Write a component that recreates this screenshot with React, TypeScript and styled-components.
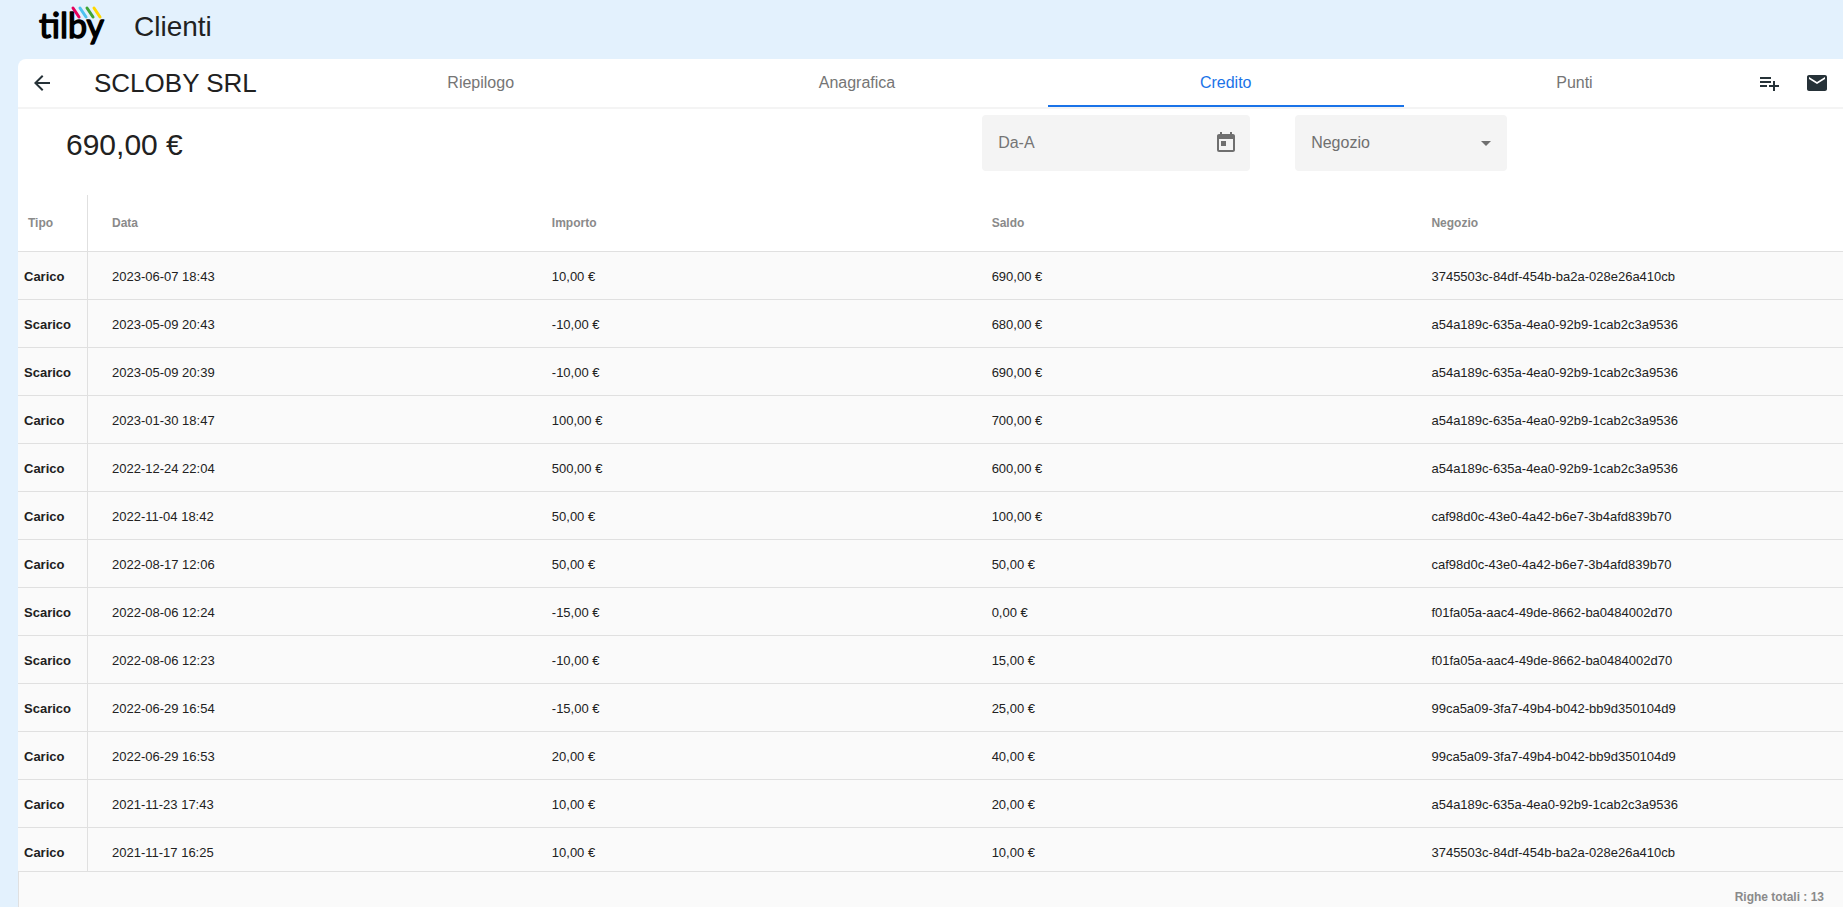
import React from "react";
import styled, { createGlobalStyle } from "styled-components";
import {
  MdArrowBack,
  MdArrowDropDown,
  MdMail,
  MdPlaylistAdd,
  MdToday,
} from "react-icons/md";

const GlobalStyle = createGlobalStyle`
  *, *::before, *::after { box-sizing: border-box; }
  body {
    margin: 0;
    background: #e3f1fd;
    color: #212121;
    font-family: "Liberation Sans", Arial, sans-serif;
  }
  button, input, select { font: inherit; color: inherit; }
`;

const Page = styled.div`
  display: flex;
  flex-direction: column;
  height: 100vh;
  overflow: hidden;
`;

const TopBar = styled.header`
  display: flex;
  flex: none;
  align-items: center;
  gap: 28px;
  height: 59px;
  padding: 0 36px 5px;
`;

const Logo = styled.svg`
  display: block;
  width: 70px;
  height: 50px;
`;

const AppName = styled.h1`
  margin: 0;
  font-size: 28px;
  line-height: 32px;
  font-weight: 400;
`;

const Card = styled.main`
  display: flex;
  flex: 1;
  flex-direction: column;
  min-height: 0;
  margin-left: 18px;
  background: #fff;
  border-top-left-radius: 8px;
  overflow: hidden;
`;

const Toolbar = styled.div`
  display: flex;
  flex: none;
  align-items: stretch;
  height: 50px;
  padding-right: 2px;
  border-bottom: 2px solid #f4f4f4;
`;

const IconButton = styled.button`
  display: flex;
  flex: none;
  align-items: center;
  justify-content: center;
  width: 48px;
  padding: 0;
  border: 0;
  background: none;
  color: #263238;
  font-size: 24px;
`;

const CustomerName = styled.h2`
  flex: none;
  width: 229px;
  margin: 0;
  padding-left: 28px;
  font-size: 26px;
  line-height: 48px;
  font-weight: 400;
  white-space: nowrap;
`;

const Tabs = styled.nav`
  display: flex;
  flex: 1;
`;

const Tab = styled.button<{ $active?: boolean }>`
  flex: 1 1 auto;
  padding: 0 16px;
  border: 0;
  border-top: 2px solid transparent;
  border-bottom: 2px solid ${(p) => (p.$active ? "#1a73e8" : "transparent")};
  background: none;
  color: ${(p) => (p.$active ? "#1a73e8" : "#757575")};
  font-size: 16px;
`;

const Summary = styled.section`
  display: flex;
  flex: none;
  align-items: flex-start;
  height: 86px;
  padding: 6px 0 0 48px;
`;

const Balance = styled.div`
  flex: 1;
  font-size: 30px;
  line-height: 60px;
`;

const Filters = styled.form`
  display: flex;
  gap: 45px;
  margin-right: 18.9%;
`;

const Field = styled.label<{ $width: number; $end: number }>`
  display: grid;
  grid-template-columns: 1fr 24px;
  align-items: center;
  width: ${(p) => p.$width}px;
  height: 56px;
  padding: 0 ${(p) => p.$end}px 0 16px;
  border-radius: 4px;
  background: #f4f4f4;
  color: #6f6f6f;
  font-size: 16px;

  svg {
    grid-area: 1 / 2;
    font-size: 24px;
    pointer-events: none;
  }
`;

const DateInput = styled.input`
  grid-area: 1 / 1;
  min-width: 0;
  height: 56px;
  padding: 0;
  border: 0;
  outline: 0;
  background: none;

  &::placeholder {
    color: #757575;
    opacity: 1;
  }
`;

const StoreSelect = styled.select`
  grid-area: 1 / 1 / 2 / 3;
  height: 56px;
  padding: 0 0 2px;
  border: 0;
  outline: 0;
  appearance: none;
  background: none;
`;

const TableArea = styled.div`
  flex: 1;
  min-height: 0;
  overflow: hidden;
`;

const Table = styled.table`
  width: 100%;
  table-layout: fixed;
  border-collapse: separate;
  border-spacing: 0;
  text-align: left;
`;

const Column = styled.col<{ $width?: string }>`
  width: ${(p) => p.$width ?? "auto"};
`;

const HeadCell = styled.th<{ $first?: boolean }>`
  height: 57px;
  padding: ${(p) => (p.$first ? "0 0 0 10px" : "0 0 0 24px")};
  border-bottom: 1px solid #e0e0e0;
  border-right: ${(p) => (p.$first ? "1px solid #e0e0e0" : "0")};
  color: #8a8a8a;
  font-size: 12px;
`;

const KindCell = styled.th`
  height: 48px;
  padding: 2px 0 0 6px;
  border-bottom: 1px solid #e0e0e0;
  border-right: 1px solid #e0e0e0;
  background: #fafafa;
  font-size: 13px;
`;

const Cell = styled.td`
  height: 48px;
  padding: 2px 0 0 24px;
  border-bottom: 1px solid #e0e0e0;
  background: #fafafa;
  font-size: 13px;
  white-space: nowrap;
`;

const TableFooter = styled.footer`
  flex: none;
  height: 36px;
  padding: 16px 19px 0 0;
  border-top: 1px solid #e0e0e0;
  border-left: 1px solid #e0e0e0;
  background: #fafafa;
  color: #8a8a8a;
  font-size: 12px;
  line-height: 18px;
  font-weight: 700;
  text-align: right;
`;

const stripes = [
  { x: 37, color: "#e6005c" },
  { x: 44, color: "#4cc1f0" },
  { x: 51, color: "#3fa535" },
  { x: 58, color: "#ffd800" },
];

const tabs = ["Riepilogo", "Anagrafica", "Credito", "Punti"];
const headings = ["Tipo", "Data", "Importo", "Saldo", "Negozio"];

const STORE_A = "3745503c-84df-454b-ba2a-028e26a410cb";
const STORE_B = "a54a189c-635a-4ea0-92b9-1cab2c3a9536";
const STORE_C = "caf98d0c-43e0-4a42-b6e7-3b4afd839b70";
const STORE_D = "f01fa05a-aac4-49de-8662-ba0484002d70";
const STORE_E = "99ca5a09-3fa7-49b4-b042-bb9d350104d9";

const movements = [
  ["Carico", "2023-06-07 18:43", "10,00 €", "690,00 €", STORE_A],
  ["Scarico", "2023-05-09 20:43", "-10,00 €", "680,00 €", STORE_B],
  ["Scarico", "2023-05-09 20:39", "-10,00 €", "690,00 €", STORE_B],
  ["Carico", "2023-01-30 18:47", "100,00 €", "700,00 €", STORE_B],
  ["Carico", "2022-12-24 22:04", "500,00 €", "600,00 €", STORE_B],
  ["Carico", "2022-11-04 18:42", "50,00 €", "100,00 €", STORE_C],
  ["Carico", "2022-08-17 12:06", "50,00 €", "50,00 €", STORE_C],
  ["Scarico", "2022-08-06 12:24", "-15,00 €", "0,00 €", STORE_D],
  ["Scarico", "2022-08-06 12:23", "-10,00 €", "15,00 €", STORE_D],
  ["Scarico", "2022-06-29 16:54", "-15,00 €", "25,00 €", STORE_E],
  ["Carico", "2022-06-29 16:53", "20,00 €", "40,00 €", STORE_E],
  ["Carico", "2021-11-23 17:43", "10,00 €", "20,00 €", STORE_B],
  ["Carico", "2021-11-17 16:25", "10,00 €", "10,00 €", STORE_A],
];

export default function App() {
  return (
    <Page>
      <GlobalStyle />
      <TopBar>
        <Logo viewBox="0 0 70 50" role="img" aria-label="tilby">
          <text
            x="3"
            y="36"
            fontFamily="Lato, sans-serif"
            fontWeight="400"
            fontSize="34"
            fill="#000"
            stroke="#000"
            strokeWidth="1.4"
            strokeLinejoin="round"
          >
            tilby
          </text>
          {stripes.map((s) => (
            <line
              key={s.color}
              x1={s.x}
              y1="6"
              x2={s.x + 6}
              y2="15"
              stroke={s.color}
              strokeWidth="3"
              strokeLinecap="round"
            />
          ))}
        </Logo>
        <AppName>Clienti</AppName>
      </TopBar>
      <Card>
        <Toolbar>
          <IconButton type="button" aria-label="Indietro">
            <MdArrowBack />
          </IconButton>
          <CustomerName>SCLOBY SRL</CustomerName>
          <Tabs>
            {tabs.map((tab) => (
              <Tab key={tab} type="button" $active={tab === "Credito"}>
                {tab}
              </Tab>
            ))}
          </Tabs>
          <IconButton type="button" aria-label="Aggiungi movimento">
            <MdPlaylistAdd />
          </IconButton>
          <IconButton type="button" aria-label="Invia email">
            <MdMail />
          </IconButton>
        </Toolbar>
        <Summary>
          <Balance>690,00 €</Balance>
          <Filters>
            <Field $width={268} $end={12}>
              <DateInput type="text" placeholder="Da-A" aria-label="Da-A" />
              <MdToday />
            </Field>
            <Field $width={212} $end={9}>
              <StoreSelect aria-label="Negozio">
                <option>Negozio</option>
              </StoreSelect>
              <MdArrowDropDown />
            </Field>
          </Filters>
        </Summary>
        <TableArea>
          <Table>
            <colgroup>
              <Column $width="70px" />
              <Column $width="24.1%" />
              <Column $width="24.1%" />
              <Column $width="24.1%" />
              <Column />
            </colgroup>
            <thead>
              <tr>
                {headings.map((heading, i) => (
                  <HeadCell key={heading} scope="col" $first={i === 0}>
                    {heading}
                  </HeadCell>
                ))}
              </tr>
            </thead>
            <tbody>
              {movements.map(([kind, date, amount, balance, store]) => (
                <tr key={date}>
                  <KindCell scope="row">{kind}</KindCell>
                  <Cell>{date}</Cell>
                  <Cell>{amount}</Cell>
                  <Cell>{balance}</Cell>
                  <Cell>{store}</Cell>
                </tr>
              ))}
            </tbody>
          </Table>
        </TableArea>
        <TableFooter>Righe totali : {movements.length}</TableFooter>
      </Card>
    </Page>
  );
}
